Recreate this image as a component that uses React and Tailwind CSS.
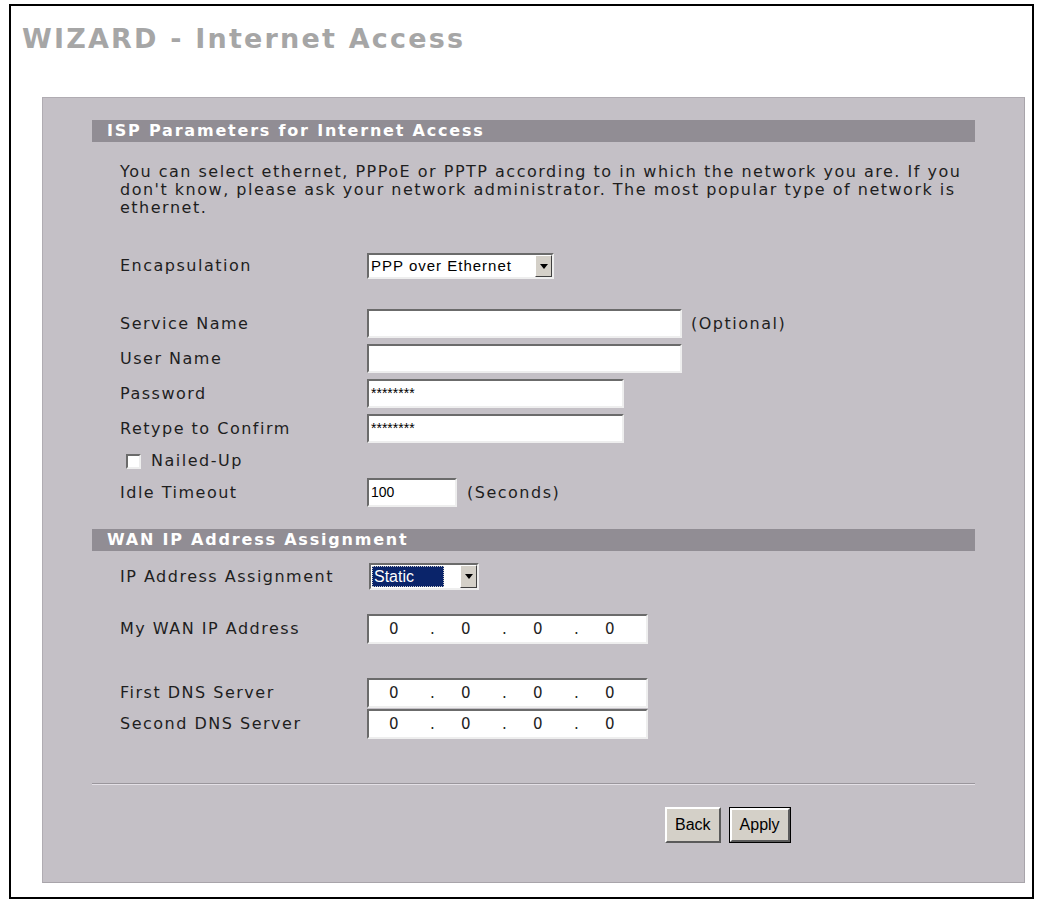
import React from 'react';

const verdana = { fontFamily: '"DejaVu Sans", Verdana, sans-serif' };

const sunken =
  'border-2 border-t-[#6b6b6b] border-l-[#6b6b6b] border-b-[#eeeeee] border-r-[#eeeeee] bg-white';

const Arrow = () => (
  <svg width="8" height="5" viewBox="0 0 8 5">
    <path d="M0 0h8L4 5z" fill="#000" />
  </svg>
);

const DropButton = () => (
  <span className="ml-auto flex w-[17px] items-center justify-center border border-t-[#ffffff] border-l-[#ffffff] border-b-[#404040] border-r-[#404040] bg-[#d4d0c8]">
    <Arrow />
  </span>
);

const TextBox = ({ width, value }) => (
  <div
    className={`${sunken} h-[29px] ${width} flex items-center pl-[2px] text-[14px] text-black font-['Liberation_Sans',Arial,sans-serif]`}
  >
    {value}
  </div>
);

const IpBox = () => (
  <div
    className={`${sunken} flex h-[30px] w-[281px] items-center pl-[20px] text-[15px] text-[#222]`}
    style={verdana}
  >
    <span className="w-[41px]">0</span>
    <span className="w-[31px]">.</span>
    <span className="w-[41px]">0</span>
    <span className="w-[31px]">.</span>
    <span className="w-[41px]">0</span>
    <span className="w-[31px]">.</span>
    <span className="w-[41px]">0</span>
  </div>
);

const Label = ({ children, className = '' }) => (
  <span className={`text-[16px] tracking-[1.5px] text-[#1e1e1e] ${className}`} style={verdana}>
    {children}
  </span>
);

const Row = ({ label, className = '', children }) => (
  <div className={`flex items-center ${className}`}>
    <Label className="w-[247px] shrink-0">{label}</Label>
    {children}
  </div>
);

const SectionBar = ({ title }) => (
  <div
    className="h-[22px] bg-[#918d94] pl-[15px] text-[16px] font-bold leading-[22px] tracking-[1.8px] text-white"
    style={verdana}
  >
    {title}
  </div>
);

const WinButton = ({ label, primary }) => (
  <button
    className={`h-[36px] bg-[#d4d0c8] text-[16px] text-black font-['Liberation_Sans',Arial,sans-serif] ${
      primary ? 'border border-black' : ''
    }`}
  >
    <span className="flex h-full items-center justify-center border-2 border-t-[#ffffff] border-l-[#ffffff] border-b-[#5a5a5a] border-r-[#5a5a5a] px-[8px]">
      {label}
    </span>
  </button>
);

export default function App() {
  return (
    <div className="min-h-[901px] bg-white pt-[4px] pl-[9px]">
      <div className="h-[895px] w-[1025px] border-2 border-black pt-[17px] pl-[11px]">
        <h1
          className="h-[31px] text-[27px] font-bold leading-[31px] tracking-[2.2px] text-[#a6a6a6]"
          style={verdana}
        >
          WIZARD - Internet Access
        </h1>

        <div className="ml-[20px] mt-[43px] h-[786px] w-[983px] border border-t-[#b0acb2] border-l-[#b0acb2] border-b-[#a8a4aa] border-r-[#a8a4aa] bg-[#c4c0c6] px-[49px] pt-[22px]">
          <SectionBar title="ISP Parameters for Internet Access" />

          <div className="pl-[28px]">
            <p
              className="mt-[21px] whitespace-nowrap text-[16px] leading-[18px] tracking-[1.5px] text-[#1e1e1e]"
              style={verdana}
            >
              You can select ethernet, PPPoE or PPTP according to in which the network you are. If you
              <br />
              don't know, please ask your network administrator. The most popular type of network is
              <br />
              ethernet.
            </p>

            <Row label="Encapsulation" className="mt-[36px]">
              <div className={`${sunken} flex h-[26px] w-[187px] items-stretch`}>
                <span className="flex items-center pl-[2px] text-[15px] tracking-[1px] text-black font-['Liberation_Sans',Arial,sans-serif]">
                  PPP over Ethernet
                </span>
                <DropButton />
              </div>
            </Row>

            <Row label="Service Name" className="mt-[30px]">
              <TextBox width="w-[315px]" value="" />
              <Label className="ml-[9px]">(Optional)</Label>
            </Row>
            <Row label="User Name" className="mt-[6px]">
              <TextBox width="w-[315px]" value="" />
            </Row>
            <Row label="Password" className="mt-[6px]">
              <TextBox width="w-[257px]" value="********" />
            </Row>
            <Row label="Retype to Confirm" className="mt-[6px]">
              <TextBox width="w-[257px]" value="********" />
            </Row>

            <div className="mt-[6px] flex h-[24px] items-center pl-[6px]">
              <span className={`${sunken} h-[15px] w-[15px]`} />
              <Label className="ml-[10px]">Nailed-Up</Label>
            </div>

            <Row label="Idle Timeout" className="mt-[5px]">
              <TextBox width="w-[90px]" value="100" />
              <Label className="ml-[10px]">(Seconds)</Label>
            </Row>
          </div>

          <div className="mt-[22px]">
            <SectionBar title="WAN IP Address Assignment" />
          </div>

          <div className="pl-[28px]">
            <Row label="IP Address Assignment" className="mt-[12px]">
              <div className={`${sunken} ml-[2px] flex h-[27px] w-[110px] items-stretch`}>
                <span className="m-[1px] flex w-[72px] items-center border border-dotted border-[#c8c8c8] bg-[#0a246a] pl-[1px] text-[16px] text-white font-['Liberation_Sans',Arial,sans-serif]">
                  Static
                </span>
                <DropButton />
              </div>
            </Row>

            <Row label="My WAN IP Address" className="mt-[24px]">
              <IpBox />
            </Row>
            <Row label="First DNS Server" className="mt-[34px]">
              <IpBox />
            </Row>
            <Row label="Second DNS Server" className="mt-[1px]">
              <IpBox />
            </Row>
          </div>

          <div className="mt-[44px] border-t border-b border-t-[#9a969c] border-b-[#e4e0e6]" />

          <div className="mt-[22px] flex gap-[8px] pl-[573px]">
            <WinButton label="Back" />
            <WinButton label="Apply" primary />
          </div>
        </div>
      </div>
    </div>
  );
}
